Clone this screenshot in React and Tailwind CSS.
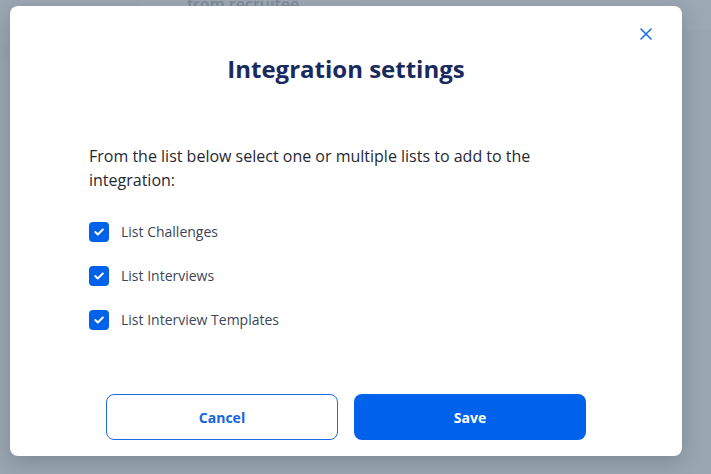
import { useState } from "react";

const LISTS = [
  { id: "challenges", label: "List Challenges" },
  { id: "interviews", label: "List Interviews" },
  { id: "templates", label: "List Interview Templates" },
];

function CheckIcon() {
  return (
    <svg width="10" height="8" viewBox="0 0 10 8" fill="none">
      <path
        d="M1.2 4.1 3.8 6.5 8.8 1.5"
        stroke="white"
        strokeWidth="2"
        strokeLinecap="round"
        strokeLinejoin="round"
      />
    </svg>
  );
}

function CloseIcon() {
  return (
    <svg width="12" height="12" viewBox="0 0 12 12" fill="none">
      <path d="M1 1 11 11M11 1 1 11" stroke="#1a6ff0" strokeWidth="1.6" strokeLinecap="round" />
    </svg>
  );
}

export default function App() {
  const [checked, setChecked] = useState({
    challenges: true,
    interviews: true,
    templates: true,
  });

  const toggle = (id) => setChecked((c) => ({ ...c, [id]: !c[id] }));

  return (
    <div
      className="relative h-[474px] w-full overflow-hidden bg-[#9aa6b1]"
      style={{ fontFamily: '"Open Sans", "Noto Sans", sans-serif' }}
    >
      {/* dimmed page behind the dialog */}
      <div className="flex h-[30px]">
        <div className="w-[140px] bg-[#9ba7b2]" />
        <div className="w-[220px] bg-[#9da9b4] pl-[47px]">
          <span className="block -mt-[8px] text-[16px] leading-[24px] font-semibold text-[#7f8c98]">from recruitee</span>
        </div>
        <div className="flex-1 bg-[#9ca8b3]" />
      </div>
      <div className="h-[15px]" />
      <div className="h-[15px] w-[30px] bg-[#97a4b0]" />

      {/* dialog */}
      <div className="absolute inset-0 pl-[10px] pt-[6px]">
        <div className="relative flex h-[450px] w-[672px] flex-col rounded-[8px] bg-white shadow-[0_6px_20px_rgba(40,55,70,0.25)]">
          <button className="absolute right-[30px] top-[22px] flex h-[12px] w-[12px] items-center justify-center">
            <CloseIcon />
          </button>

          <h2 className="pt-[48px] text-center text-[24px] font-bold leading-[30px] text-[#192a5e]">
            Integration settings
          </h2>

          <div className="px-[79px]">
            <p className="mt-[60px] text-[16px] leading-[24px] text-[#1f2933]">
              From the list below select one or multiple lists to add to the integration:
            </p>

            <div className="mt-[30px] flex flex-col gap-[24px]">
              {LISTS.map((item) => (
                <label key={item.id} className="flex h-[20px] cursor-pointer items-center gap-[12px]">
                  <span
                    onClick={() => toggle(item.id)}
                    className={
                      checked[item.id]
                        ? "flex h-[20px] w-[20px] items-center justify-center rounded-[4px] bg-[#0062ea]"
                        : "flex h-[20px] w-[20px] items-center justify-center rounded-[4px] border border-[#9aa6b1] bg-white"
                    }
                  >
                    {checked[item.id] && <CheckIcon />}
                  </span>
                  <span className="text-[14px] leading-[20px] text-[#3b4757]">{item.label}</span>
                </label>
              ))}
            </div>
          </div>

          <div className="mt-[64px] flex justify-center gap-[16px]">
            <button className="h-[46px] w-[232px] rounded-[8px] border border-[#1a6ce6] bg-white text-[14px] font-bold text-[#1466e0]">
              Cancel
            </button>
            <button className="h-[46px] w-[232px] rounded-[8px] bg-[#0062ea] text-[14px] font-bold text-white">
              Save
            </button>
          </div>
        </div>
      </div>
    </div>
  );
}
